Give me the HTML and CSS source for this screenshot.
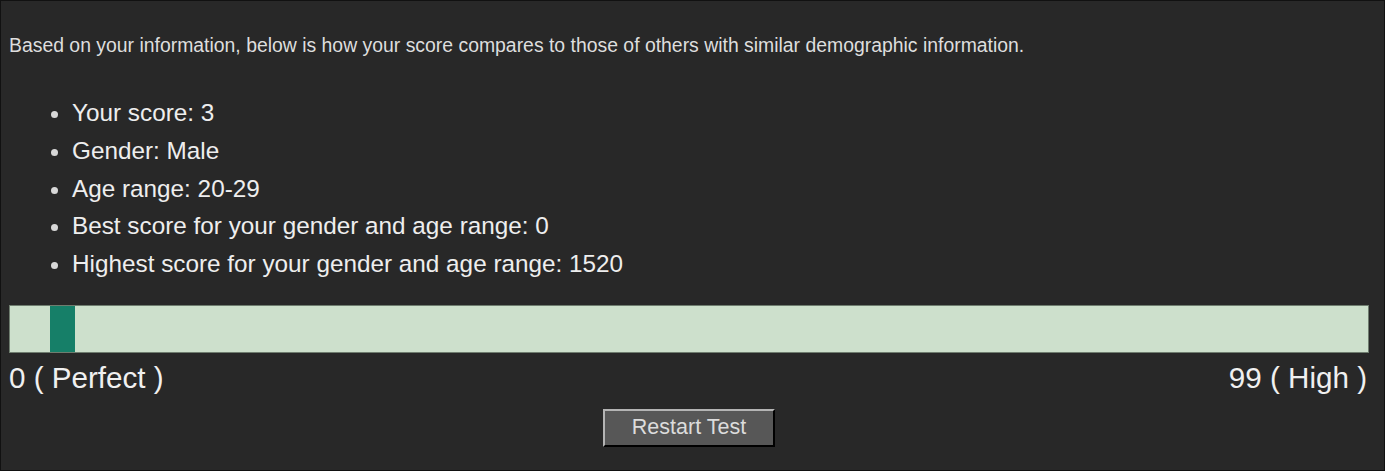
FILE: index.html
```html
<!DOCTYPE html>
<html>
<head>
<meta charset="utf-8">
<link rel="stylesheet" href="styles.css">
</head>
<body>
<div class="page">
  <p class="intro">Based on your information, below is how your score compares to those of others with similar demographic information.</p>
  <ul class="stats">
    <li>Your score: 3</li>
    <li>Gender: Male</li>
    <li>Age range: 20-29</li>
    <li>Best score for your gender and age range: 0</li>
    <li>Highest score for your gender and age range: 1520</li>
  </ul>
  <div class="bar">
    <div class="marker" style="margin-left: 40px;"></div>
  </div>
  <div class="labels">
    <span>0 ( Perfect )</span>
    <span>99 ( High )</span>
  </div>
  <div class="actions">
    <button class="restart">Restart Test</button>
  </div>
</div>
</body>
</html>
```
FILE: styles.css
```css
html, body {
  margin: 0;
  padding: 0;
  background: #282828;
}
.page {
  box-sizing: border-box;
  width: 1385px;
  height: 471px;
  border: 1px solid #111;
  padding: 0 15px 0 8px;
  font-family: "Liberation Sans", Arial, sans-serif;
  color: #e6e6e6;
  overflow: hidden;
}
.intro {
  margin: 33px 0 0;
  font-size: 19.4px;
  line-height: 22px;
  color: #dedede;
}
.stats {
  margin: 38px 0 0;
  padding: 0 0 0 63px;
  font-size: 24.3px;
  line-height: 37.75px;
  color: #eeeeee;
}
.stats li::marker {
  color: #d8d8d8;
}
.bar {
  margin-top: 22px;
  height: 46px;
  border: 1px solid #6f7d6f;
  background: #cde0cc;
  display: flex;
}
.marker {
  width: 25px;
  background: #167f68;
}
.labels {
  margin-top: 8px;
  display: flex;
  justify-content: space-between;
  font-size: 29.6px;
  line-height: 34px;
  color: #f0f0f0;
  padding-right: 2px;
}
.actions {
  margin-top: 14px;
  display: flex;
  justify-content: center;
}
.restart {
  box-sizing: border-box;
  width: 172px;
  height: 38px;
  background: #575757;
  color: #dcdcdc;
  font-family: "Liberation Sans", Arial, sans-serif;
  font-size: 21.5px;
  border-style: solid;
  border-width: 2px;
  border-color: #b4b4b4 #000 #000 #b4b4b4;
  padding: 0;
}
```
